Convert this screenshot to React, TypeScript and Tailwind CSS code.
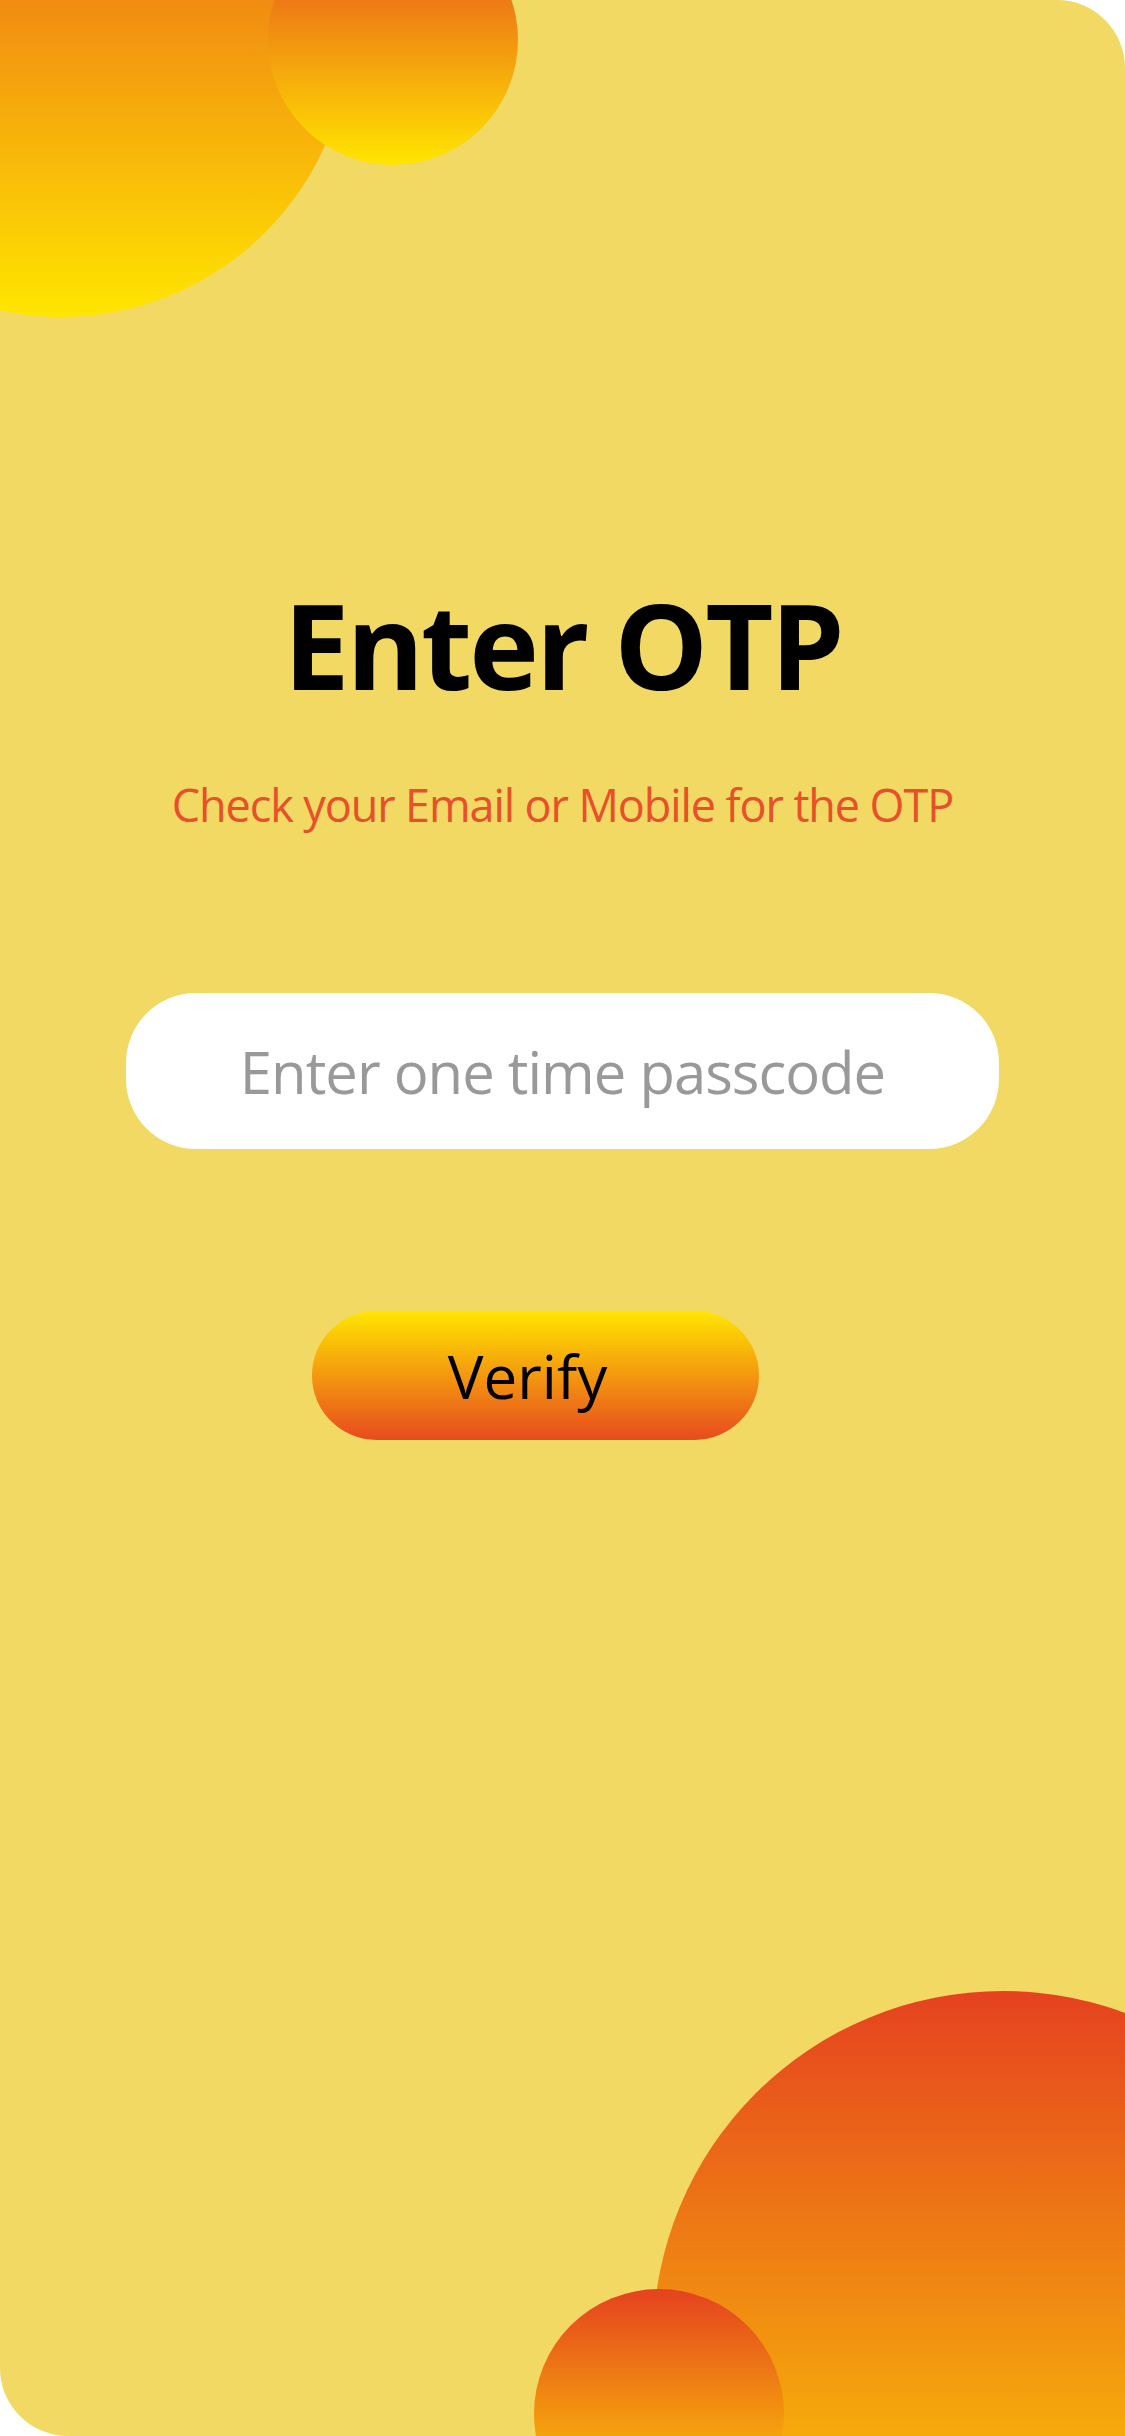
import React from 'react';

const font = { fontFamily: '"Open Sans", "Noto Sans", sans-serif' };

const App: React.FC = () => {
  return (
    <div className="min-h-screen w-full bg-white">
      <div
        className="relative w-[1125px] h-[2436px] overflow-hidden rounded-tr-[68px] rounded-bl-[68px] bg-[#F2D964]"
        style={font}
      >
        {/* decorative circles */}
        <div className="absolute left-[-228px] top-[-261px] w-[578px] h-[578px] rounded-full bg-linear-to-b/srgb from-[#E5421F] to-[#FFE600]" />
        <div className="absolute left-[268px] top-[-85px] w-[250px] h-[250px] rounded-full bg-linear-to-b/srgb from-[#E5421F] to-[#FFE600]" />
        <div className="absolute left-[653px] top-[1991px] w-[700px] h-[700px] rounded-full bg-linear-to-b/srgb from-[#E5421F] to-[#FFE600]" />
        <div className="absolute left-[534px] top-[2289px] w-[250px] h-[250px] rounded-full bg-linear-to-b/srgb from-[#E5421F] to-[#FFE600]" />

        <div className="relative flex flex-col items-center pt-[586px]">
          <div className="flex flex-col items-center gap-[78px]">
            <h1 className="text-[118px] leading-none font-bold tracking-[-3px] text-black">Enter OTP</h1>
            <p className="text-[45px] leading-none tracking-[-1.1px] text-[#E8502A]">
              Check your Email or Mobile for the OTP
            </p>
          </div>

          <form
            className="mt-[166px] flex flex-col items-center gap-[162px]"
            onSubmit={(e) => e.preventDefault()}
          >
            <input
              type="text"
              placeholder="Enter one time passcode"
              className="w-[873px] h-[156px] rounded-[70px] bg-white text-center text-[58px] tracking-[-1px] text-black placeholder:text-[#999999] outline-none"
              style={font}
            />

            <button
              type="submit"
              className="mr-[54px] w-[447px] h-[129px] pr-[16px] rounded-full bg-linear-to-b/srgb from-[#FFE600] to-[#E84A1E] text-[60px] leading-none text-black"
              style={font}
            >
              Verify
            </button>
          </form>
        </div>
      </div>
    </div>
  );
};

export default App;
